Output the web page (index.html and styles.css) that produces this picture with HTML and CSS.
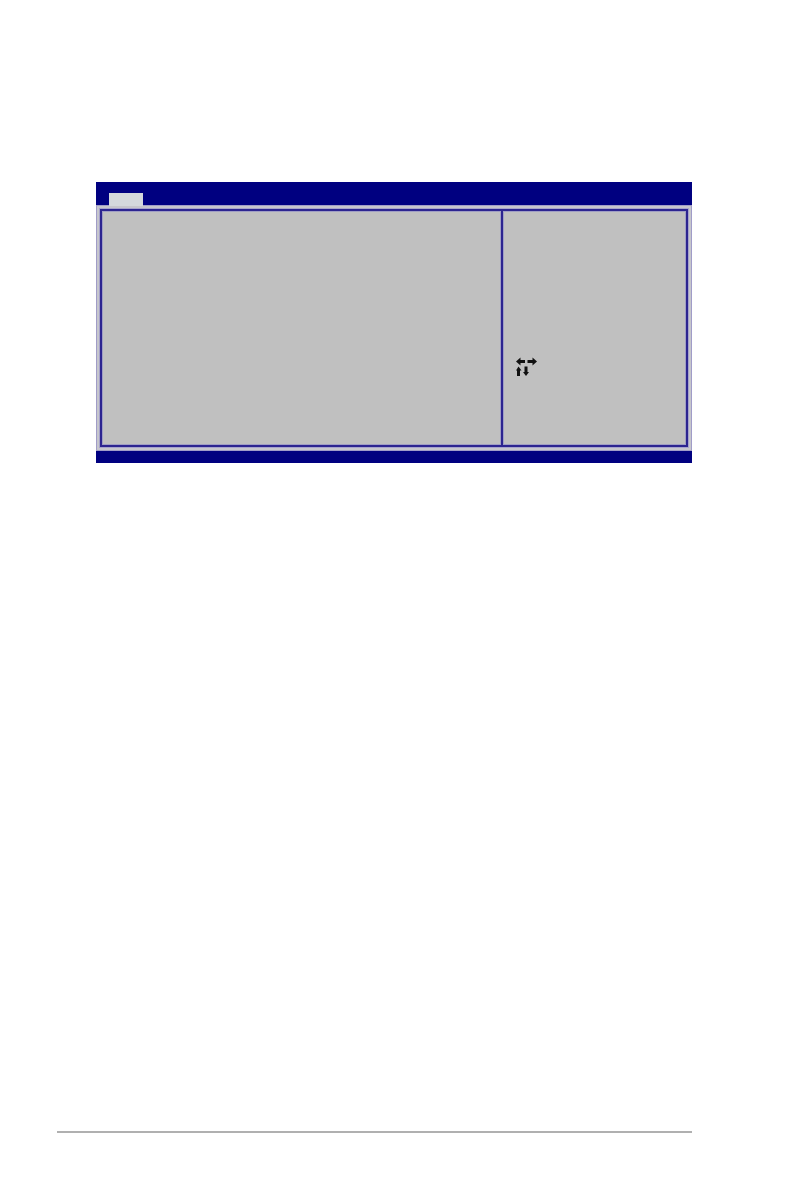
FILE: index.html
```
<!DOCTYPE html>
<html lang="en">
<head>
    <meta charset="UTF-8">
    <title>BIOS setup</title>
    <link rel="stylesheet" href="styles.css">
</head>
<body>
    <div class="page">
        <div class="bios">
            <div class="bios-menu">
                <div class="bios-tab"></div>
            </div>
            <div class="bios-body">
                <div class="bios-frame">
                    <div class="bios-main"></div>
                    <div class="bios-help">
                        <!-- navigation keys -->
                        <svg class="keys" width="22" height="20" viewBox="0 0 22 20">
                            <path d="M0 4.500L4.500 0.500V3H9V6H4.500V8.500Z" />
                            <path d="M21 4.500L16.500 0.500V3H11.500V6H16.500V8.500Z" />
                            <path d="M2.500 9.500L5.500 13.500H4V19H1V13.500H0Z" />
                            <path d="M10 19L13 15H11.500V9.500H8.500V15H7Z" />
                        </svg>
                    </div>
                </div>
            </div>
            <div class="bios-status"></div>
        </div>
        <hr class="page-rule">
    </div>
</body>
</html>
```

FILE: styles.css
```
* {
  margin: 0px;
  padding: 0px;
  box-sizing: border-box;
}
body {
  background: #fff;
  font-family: "Liberation Sans", Arial, sans-serif;
}
.page {
  display: flex;
  flex-direction: column;
  min-height: 100vh;
  padding: 182px 102px 63px 57px;
}
.bios {
  margin-left: 39px;
  background: #000080;
}
.bios-menu {
  display: flex;
  align-items: flex-end;
  height: 23px;
  padding-left: 13px;
}
.bios-tab {
  position: relative;
  width: 34px;
  height: 13px;
  margin-bottom: -1px;
  background: #d4d8dc;
}
.bios-body {
  padding: 3px;
  background: #c6c6cc;
  border: 1px solid #a09cc8;
}
.bios-frame {
  display: flex;
  min-height: 238px;
  background: #c0c0c0;
  border: 2px solid #2c2490;
  box-shadow: 0 0 0 1px #a6a2cc, inset 0 0 0 1px #a09ec4;
}
.bios-main {
  flex: 1;
  border-right: 1px solid #a09ec4;
}
.bios-help {
  width: 185px;
  padding: 146px 13px 10px 13px;
  border-left: 2px solid #2c2490;
  box-shadow: inset 1px 0 0 #a09ec4;
}
.keys {
  display: block;
  fill: #111;
}
.bios-status {
  height: 12px;
}
.page-rule {
  height: 2px;
  margin-top: auto;
  border: none;
  background: #b0b0b0;
}
```
